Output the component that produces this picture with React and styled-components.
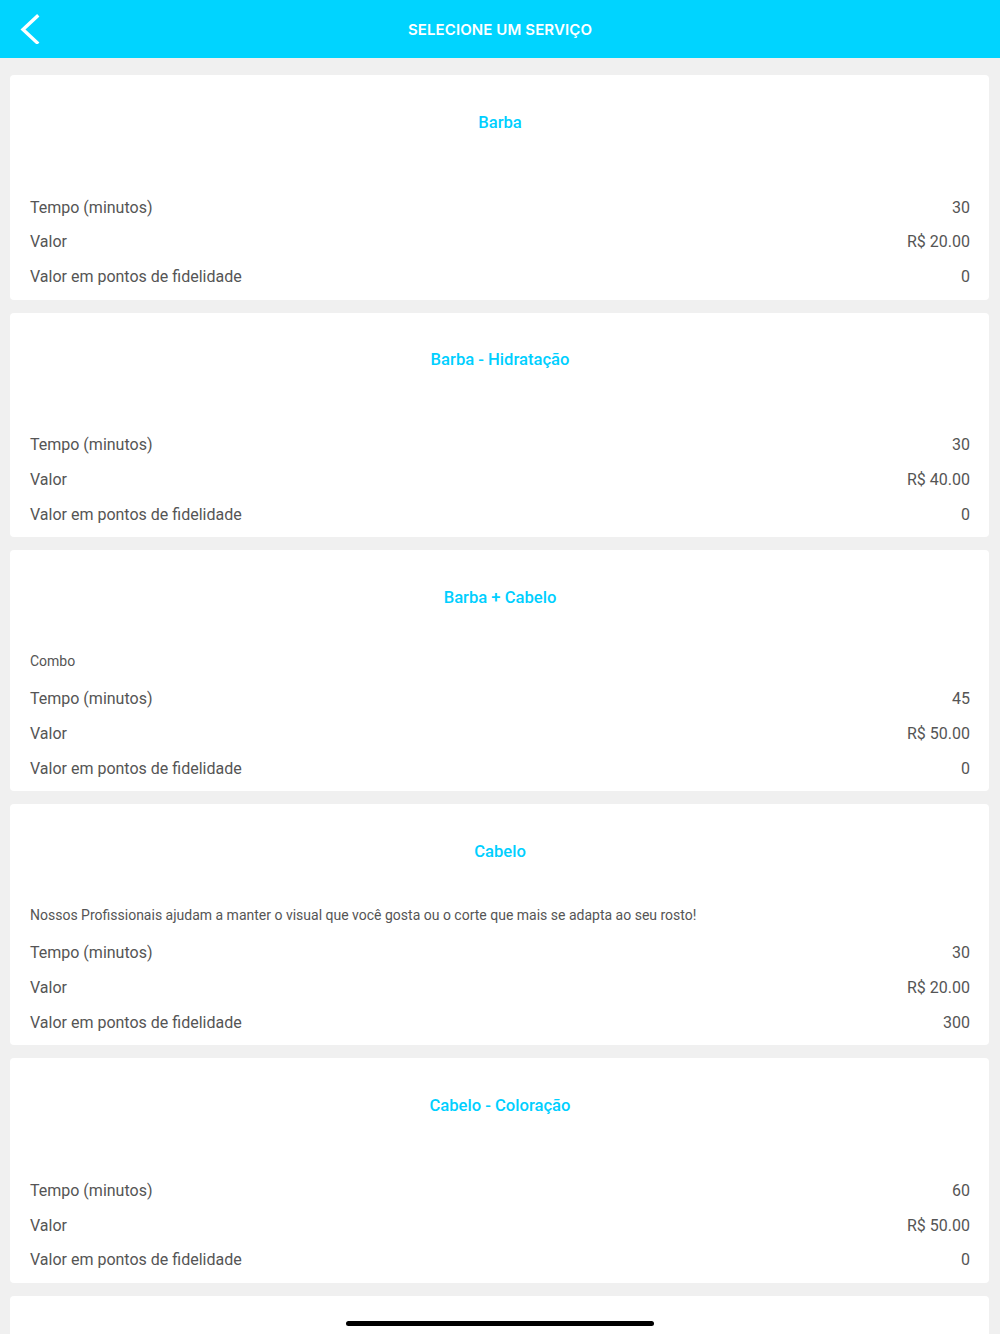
import React from 'react';
import styled, { createGlobalStyle } from 'styled-components';

const GlobalStyle = createGlobalStyle`
  html, body {
    margin: 0;
    padding: 0;
    background: #f0f0f0;
    font-family: Roboto, "Liberation Sans", sans-serif;
  }
`;

const services = [
  { name: 'Barba', desc: '', time: 30, price: 'R$ 20.00', points: 0 },
  { name: 'Barba - Hidratação', desc: '', time: 30, price: 'R$ 40.00', points: 0 },
  { name: 'Barba + Cabelo', desc: 'Combo', time: 45, price: 'R$ 50.00', points: 0 },
  {
    name: 'Cabelo',
    desc: 'Nossos Profissionais ajudam a manter o visual que você gosta ou o corte que mais se adapta ao seu rosto!',
    time: 30,
    price: 'R$ 20.00',
    points: 300,
  },
  { name: 'Cabelo - Coloração', desc: '', time: 60, price: 'R$ 50.00', points: 0 },
  { name: 'Corte Infantil', desc: '', time: 30, price: 'R$ 20.00', points: 0 },
];

const Page = styled.div`
  height: 1334px;
  overflow: hidden;
  background: #f0f0f0;
`;

const Header = styled.header`
  height: 58px;
  background: #00d4ff;
  display: flex;
  align-items: center;
  justify-content: center;
  position: relative;
`;

// back arrow sits over the header's left edge
const BackButton = styled.button`
  position: absolute;
  left: 14px;
  top: 13px;
  width: 32px;
  height: 32px;
  border: none;
  background: none;
  padding: 0;
  display: flex;
  align-items: center;
  justify-content: center;
`;

const Title = styled.h1`
  margin: 0;
  color: #fff;
  font-family: Inter, "Liberation Sans", sans-serif;
  font-size: 15px;
  font-weight: 600;
  letter-spacing: 0.1px;
`;

const List = styled.div`
  display: flex;
  flex-direction: column;
  gap: 13px;
  padding: 17px 11px 0 10px;
`;

const Card = styled.div`
  background: #fff;
  border-radius: 4px;
  padding: 0 19px 6.5px 20px;
`;

const CardTitle = styled.div`
  height: 94px;
  display: flex;
  align-items: center;
  justify-content: center;
  color: #00cfff;
  font-size: 16.6px;
  font-weight: 500;
`;

const Desc = styled.div`
  padding: 9px 0 11px;
  font-size: 14px;
  line-height: 16.5px;
  color: #555;
`;

const Row = styled.div`
  height: 34.7px;
  box-sizing: border-box;
  padding-top: 1.5px;
  display: flex;
  align-items: center;
  justify-content: space-between;
  font-size: 16px;
  color: #555;
`;

const HomeBar = styled.div`
  position: fixed;
  left: 346px;
  bottom: 8px;
  width: 308px;
  height: 5px;
  border-radius: 3px;
  background: #000;
`;

function ServiceCard({ s }) {
  return (
    <Card>
      <CardTitle>{s.name}</CardTitle>
      <Desc>{s.desc}</Desc>
      <Row>
        <span>Tempo (minutos)</span>
        <span>{s.time}</span>
      </Row>
      <Row>
        <span>Valor</span>
        <span>{s.price}</span>
      </Row>
      <Row>
        <span>Valor em pontos de fidelidade</span>
        <span>{s.points}</span>
      </Row>
    </Card>
  );
}

export default function App() {
  return (
    <Page>
      <GlobalStyle />
      <Header>
        <BackButton aria-label="Voltar">
          <svg width="20" height="30" viewBox="0 0 20 30">
            <path d="M17 2.5 L3 15.5 L17 28.5" fill="none" stroke="#fff" strokeWidth="3.4" strokeLinecap="square" />
          </svg>
        </BackButton>
        <Title>SELECIONE UM SERVIÇO</Title>
      </Header>
      <List>
        {services.map((s) => (
          <ServiceCard key={s.name} s={s} />
        ))}
      </List>
      <HomeBar />
    </Page>
  );
}
